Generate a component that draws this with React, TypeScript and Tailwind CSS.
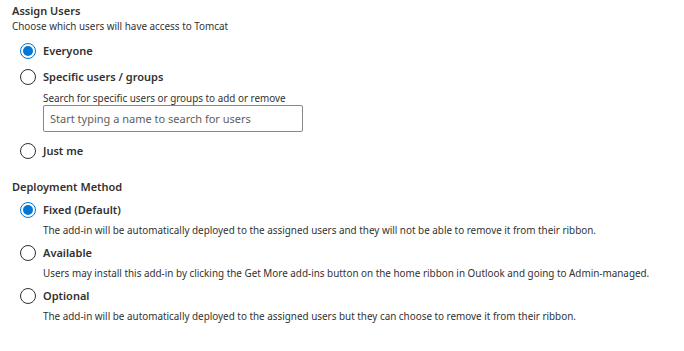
import React, { useState } from 'react';

interface RadioProps {
  checked: boolean;
  label: string;
  onSelect: () => void;
}

const Radio: React.FC<RadioProps> = ({ checked, label, onSelect }) => (
  <button type="button" onClick={onSelect} className="flex items-center gap-[7px] h-[18px]">
    <span
      className={
        checked
          ? 'w-[16px] h-[16px] rounded-full border border-[#0078d4] flex items-center justify-center'
          : 'w-[16px] h-[16px] rounded-full border border-[#323130]'
      }
    >
      {checked && <span className="w-[10px] h-[10px] rounded-full bg-[#0078d4]" />}
    </span>
    <span className="text-[11px] font-semibold text-[#323130]">{label}</span>
  </button>
);

const DEPLOY = [
  {
    id: 'fixed',
    label: 'Fixed (Default)',
    desc: 'The add-in will be automatically deployed to the assigned users and they will not be able to remove it from their ribbon.',
  },
  {
    id: 'available',
    label: 'Available',
    desc: 'Users may install this add-in by clicking the Get More add-ins button on the home ribbon in Outlook and going to Admin-managed.',
  },
  {
    id: 'optional',
    label: 'Optional',
    desc: 'The add-in will be automatically deployed to the assigned users but they can choose to remove it from their ribbon.',
  },
];

export default function App() {
  const [assign, setAssign] = useState('everyone');
  const [deploy, setDeploy] = useState('fixed');
  const [query, setQuery] = useState('');

  return (
    <div className="w-[684px] h-[351px] bg-white font-['Noto_Sans',sans-serif] text-[#323130] pl-[12px] pt-[3px]">
      {/* Assign users */}
      <h2 className="text-[11px] font-semibold leading-[16px]">Assign Users</h2>
      <p className="text-[9.9px] leading-[14px] text-[#323130]">Choose which users will have access to Tomcat</p>

      <div className="pl-[8px] mt-[9px] flex flex-col">
        <Radio checked={assign === 'everyone'} label="Everyone" onSelect={() => setAssign('everyone')} />
        <div className="mt-[8px]">
          <Radio checked={assign === 'specific'} label="Specific users / groups" onSelect={() => setAssign('specific')} />
        </div>
        <div className="pl-[23px] mt-[5px]">
          <p className="text-[9.9px] leading-[14px] text-[#323130]">Search for specific users or groups to add or remove</p>
          <input
            value={query}
            onChange={(e) => setQuery(e.target.value)}
            placeholder="Start typing a name to search for users"
            className="block w-[260px] h-[27px] border border-[#8a8886] rounded-[2px] px-[6px] text-[11px] placeholder:text-[#605e5c] outline-none"
          />
        </div>
        <div className="mt-[10px]">
          <Radio checked={assign === 'me'} label="Just me" onSelect={() => setAssign('me')} />
        </div>
      </div>

      {/* Deployment method */}
      <h2 className="text-[11px] font-semibold leading-[16px] mt-[19px]">Deployment Method</h2>
      <div className="pl-[8px] mt-[6px] flex flex-col gap-[7px]">
        {DEPLOY.map((d) => (
          <div key={d.id} className="flex flex-col">
            <Radio checked={deploy === d.id} label={d.label} onSelect={() => setDeploy(d.id)} />
            <p className="pl-[23px] mt-[4px] text-[9.9px] leading-[14px] text-[#323130]">{d.desc}</p>
          </div>
        ))}
      </div>
    </div>
  );
}
